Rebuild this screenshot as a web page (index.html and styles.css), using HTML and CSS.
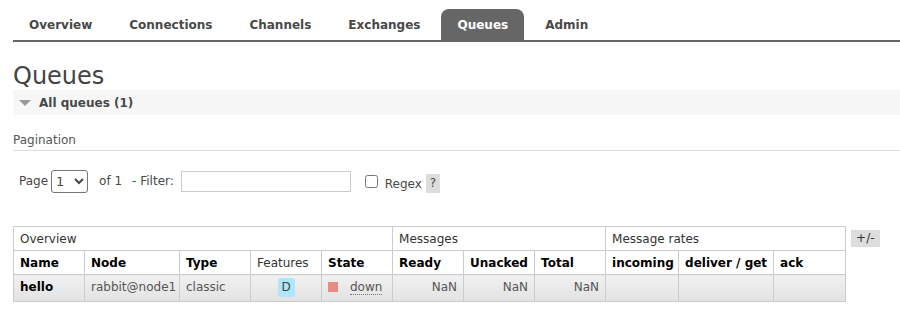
FILE: index.html
```html
<!DOCTYPE html>
<html lang="en">
<head>
  <meta charset="UTF-8">
  <title>RabbitMQ Management: Queues</title>
  <link rel="stylesheet" href="styles.css">
</head>
<body>
  <ul class="tabs">
    <li><a href="#">Overview</a></li>
    <li><a href="#">Connections</a></li>
    <li><a href="#">Channels</a></li>
    <li><a href="#">Exchanges</a></li>
    <li class="selected"><a href="#">Queues</a></li>
    <li><a href="#">Admin</a></li>
  </ul>

  <h1>Queues</h1>

  <div class="section-head">
    <span class="triangle"></span>
    <span>All queues (1)</span>
  </div>

  <div class="pagination-title">Pagination</div>

  <div class="filter-row">
    <label class="page-label">Page</label>
    <select class="page-select">
      <option>1</option>
    </select>
    <span class="of">of 1</span>
    <label class="filter-label">- Filter:</label>
    <input class="filter-input" type="text">
    <input class="regex-box" type="checkbox">
    <label class="regex-label">Regex</label>
    <span class="help">?</span>
  </div>

  <div class="table-wrap">
    <table class="list">
      <colgroup>
        <col class="c-name">
        <col class="c-node">
        <col class="c-type">
        <col class="c-feat">
        <col class="c-state">
        <col class="c-ready">
        <col class="c-unacked">
        <col class="c-total">
        <col class="c-in">
        <col class="c-deliver">
        <col class="c-ack">
      </colgroup>
      <thead>
        <tr class="group">
          <th colspan="5">Overview</th>
          <th colspan="3">Messages</th>
          <th colspan="3">Message rates</th>
        </tr>
        <tr class="cols">
          <th>Name</th>
          <th>Node</th>
          <th>Type</th>
          <th class="plain">Features</th>
          <th>State</th>
          <th>Ready</th>
          <th>Unacked</th>
          <th>Total</th>
          <th>incoming</th>
          <th>deliver / get</th>
          <th>ack</th>
        </tr>
      </thead>
      <tbody>
        <tr>
          <td class="qname">hello</td>
          <td>rabbit@node1</td>
          <td>classic</td>
          <td class="center"><span class="badge">D</span></td>
          <td><span class="state-dot"></span><abbr class="state">down</abbr></td>
          <td class="num">NaN</td>
          <td class="num">NaN</td>
          <td class="num">NaN</td>
          <td></td>
          <td></td>
          <td></td>
        </tr>
      </tbody>
    </table>
    <span class="toggle">+/-</span>
  </div>
</body>
</html>
```

FILE: styles.css
```css
* {
  margin: 0;
  padding: 0;
  box-sizing: border-box;
}

body {
  padding: 9px 0 0 13px;
  font-family: "DejaVu Sans", Verdana, sans-serif;
  font-size: 12px;
  color: #484848;
  background: #fff;
}

.tabs {
  display: flex;
  list-style: none;
  border-bottom: 2px solid #666;
}

.tabs li {
  margin-right: 5px;
}

.tabs a {
  display: block;
  padding: 0 16px;
  height: 31px;
  line-height: 33px;
  font-weight: bold;
  color: #484848;
  text-decoration: none;
}

.tabs .selected a {
  background: #666;
  color: #fff;
  border-radius: 8px 8px 0 0;
}

h1 {
  margin-top: 20px;
  font-size: 24px;
  line-height: 28px;
  font-weight: normal;
  color: #444;
}

.section-head {
  display: flex;
  align-items: center;
  height: 25px;
  background: #f7f7f7;
  font-weight: bold;
  color: #484848;
}

.triangle {
  width: 0;
  height: 0;
  margin: 1px 8px 0 6px;
  border-left: 6px solid transparent;
  border-right: 6px solid transparent;
  border-top: 6px solid #999;
}

.pagination-title {
  margin-top: 17px;
  line-height: 16px;
  padding-bottom: 2px;
  border-bottom: 1px solid #ddd;
  color: #555;
}

.filter-row {
  display: flex;
  align-items: center;
  margin-top: 18px;
  height: 24px;
  padding-left: 6px;
}

.page-select {
  width: 37px;
  height: 23px;
  margin-left: 3px;
  font-family: "DejaVu Sans", Verdana, sans-serif;
  font-size: 13px;
  color: #484848;
  border: 1px solid #767676;
  border-radius: 3px;
  background: #fff;
}

.of {
  margin-left: 11px;
}

.filter-label {
  margin-left: 10px;
}

.filter-input {
  width: 170px;
  height: 21px;
  margin-left: 7px;
  border: 1px solid #ccc;
}

.regex-box {
  width: 13px;
  height: 13px;
  margin-left: 14px;
}

.regex-label {
  margin-left: 7px;
  margin-top: 5px;
}

.help {
  display: inline-block;
  width: 14px;
  height: 19px;
  margin-left: 4px;
  margin-top: 5px;
  line-height: 19px;
  text-align: center;
  background: #ddd;
}

.table-wrap {
  display: flex;
  align-items: flex-start;
  margin-top: 33px;
}

.list {
  border-collapse: collapse;
  table-layout: fixed;
  width: 832px;
  color: #333;
}

.list th,
.list td {
  border: 1px solid #ccc;
  padding: 0 0 0 6px;
  text-align: left;
  white-space: nowrap;
}

.list .group th {
  height: 24px;
  font-weight: normal;
}

.list .cols th {
  height: 24px;
  color: #000;
}

.list .cols th.plain {
  font-weight: normal;
  color: #333;
}

.c-name { width: 71px; }
.c-node { width: 95px; }
.c-type { width: 71px; }
.c-feat { width: 71px; }
.c-state { width: 71px; }
.c-ready { width: 71px; }
.c-unacked { width: 71px; }
.c-total { width: 71px; }
.c-in { width: 73px; }
.c-deliver { width: 95px; }
.c-ack { width: 72px; }

.list tbody td {
  height: 27px;
  padding-bottom: 3px;
  color: #555;
  background: linear-gradient(#f1f1f1, #e2e2e2);
}

.list td.qname {
  font-weight: bold;
  color: #000;
}

.list td.center {
  text-align: center;
  padding: 0 0 1px 0;
}

.list td.num {
  text-align: right;
  padding: 0 6px 3px 0;
}

.badge {
  display: inline-block;
  width: 17px;
  height: 19px;
  line-height: 19px;
  border-radius: 3px;
  background: #aee6fa;
  color: #444;
  text-align: center;
}

.state-dot {
  display: inline-block;
  width: 10px;
  height: 10px;
  margin-right: 12px;
  vertical-align: -1px;
  background: #ea8a84;
}

.state {
  text-decoration: none;
  border-bottom: 1px dotted #777;
}

.toggle {
  display: inline-block;
  margin: 4px 0 0 5px;
  padding: 0 5px;
  height: 17px;
  line-height: 17px;
  background: #ddd;
  color: #333;
}
```
